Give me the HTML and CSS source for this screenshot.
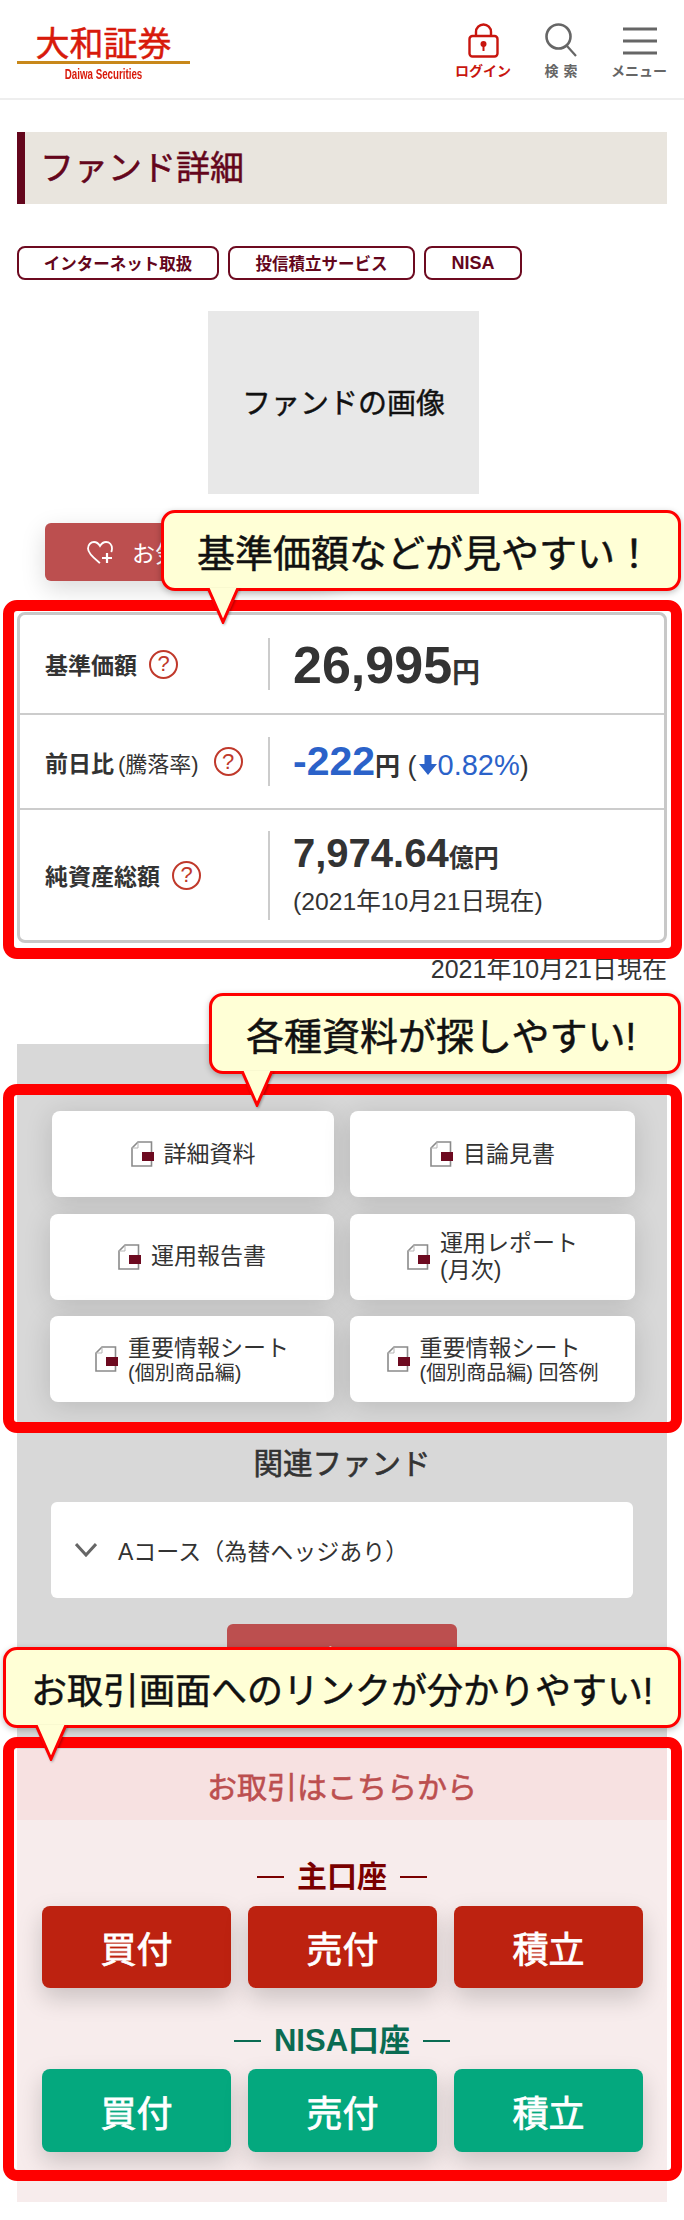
FILE: index.html
```html
<!DOCTYPE html>
<html lang="ja">
<head>
    <meta charset="UTF-8">
    <title>ファンド詳細</title>
    <link rel="stylesheet" href="styles.css">
</head>
<body>
<svg class="defs" width="0" height="0">
    <symbol id="doc" viewBox="0 0 23 26">
        <path d="M7 1 H20.5 V25 H1 V7 Z" fill="#fff" stroke="#8a8a8a" stroke-width="1.6"/>
        <path d="M7 1 V7 H1" fill="none" stroke="#b5b5b5" stroke-width="1"/>
        <rect x="11" y="11" width="12" height="9" fill="#6d0a20"/>
    </symbol>
</svg>
<div class="page">
    <div class="header">
        <div class="logo">
            <div class="logo-name">大和証券</div>
            <div class="logo-line"></div>
            <div class="logo-en">Daiwa Securities</div>
        </div>
        <div class="nav">
            <div class="nav-item login">
                <svg width="31" height="35" viewBox="0 0 31 35" fill="none" stroke="#c8150e" stroke-width="2.4">
                    <path d="M8 13 V9 a7.5 7.5 0 0 1 15 0 V13"/>
                    <rect x="1.5" y="13" width="28" height="20.5" rx="3"/>
                    <circle cx="15.5" cy="21" r="3" fill="#c8150e" stroke="none"/>
                    <rect x="14.5" y="22" width="2" height="6" fill="#c8150e" stroke="none"/>
                </svg>
                <span>ログイン</span>
            </div>
            <div class="nav-item">
                <svg width="33" height="35" viewBox="0 0 33 35" fill="none" stroke="#666">
                    <circle cx="13.5" cy="13.5" r="12" stroke-width="2.6"/>
                    <path d="M22 23 L31 33" stroke-width="2.2"/>
                </svg>
                <span class="spaced">検索</span>
            </div>
            <div class="nav-item">
                <svg width="35" height="35" viewBox="0 0 35 35" fill="none" stroke="#666" stroke-width="3">
                    <path d="M1 6 H35 M1 18 H35 M1 30 H35"/>
                </svg>
                <span>メニュー</span>
            </div>
        </div>
    </div>

    <h1 class="page-title">ファンド詳細</h1>

    <div class="tags">
        <span class="tag tag-a">インターネット取扱</span>
        <span class="tag tag-b">投信積立サービス</span>
        <span class="tag tag-c">NISA</span>
    </div>

    <div class="fund-image">ファンドの画像</div>

    <div class="fav-btn">
        <svg width="26" height="23" viewBox="0 0 26 23" fill="none" stroke="#fff" stroke-width="1.8">
            <path d="M13 22 C8 18 1 13 1 7.5 C1 3.5 4 1 7 1 C9.5 1 11.5 2.5 13 5 C14.5 2.5 16.5 1 19 1 C22.5 1 25 3.5 25 7.5 C25 9 24.7 10 24.2 11"/>
            <path d="M20 12 V22 M15 17 H25" stroke-width="2.2"/>
        </svg>
        <span>お気に入り登録</span>
    </div>

    <div class="price-card">
        <div class="price-row row-1">
            <div class="price-label">基準価額<span class="help">?</span></div>
            <div class="price-value"><span class="num-xl">26,995</span><span class="unit-l">円</span></div>
        </div>
        <div class="price-row row-2">
            <div class="price-label">前日比<small>(騰落率)</small><span class="help help-wide">?</span></div>
            <div class="price-value">
                <span class="num-l blue">-222</span><span class="unit-m">円</span>
                <span class="change">(<svg class="arrow" width="18" height="20" viewBox="0 0 18 20"><path d="M5.5 0 H12.5 V9 H18 L9 20 L0 9 H5.5 Z" fill="#2b62c9"/></svg><span class="blue">0.82%</span>)</span>
            </div>
        </div>
        <div class="price-row row-3">
            <div class="price-label">純資産総額<span class="help">?</span></div>
            <div class="price-value stacked">
                <div><span class="num-m">7,974.64</span><span class="unit-m">億円</span></div>
                <div class="as-of">(2021年10月21日現在)</div>
            </div>
        </div>
    </div>
    <div class="date-note">2021年10月21日現在</div>

    <div class="docs">
        <div class="doc-grid">
            <div class="doc-btn first"><svg class="doc-icon"><use href="#doc"/></svg><span>詳細資料</span></div>
            <div class="doc-btn"><svg class="doc-icon"><use href="#doc"/></svg><span>目論見書</span></div>
            <div class="doc-btn"><svg class="doc-icon"><use href="#doc"/></svg><span>運用報告書</span></div>
            <div class="doc-btn"><svg class="doc-icon"><use href="#doc"/></svg><span>運用レポート<br>(月次)</span></div>
            <div class="doc-btn"><svg class="doc-icon"><use href="#doc"/></svg><span>重要情報シート<small>(個別商品編)</small></span></div>
            <div class="doc-btn"><svg class="doc-icon"><use href="#doc"/></svg><span>重要情報シート<small>(個別商品編) 回答例</small></span></div>
        </div>
        <h2 class="related-title">関連ファンド</h2>
        <div class="related-select">
            <svg width="22" height="14" viewBox="0 0 22 14" fill="none" stroke="#666" stroke-width="3"><path d="M1 1 L11 12 L21 1"/></svg>
            <span>Aコース（為替ヘッジあり）</span>
        </div>
        <div class="related-btn">表示</div>
    </div>

    <div class="trade">
        <div class="trade-head">お取引はこちらから</div>
        <div class="trade-body">
            <div class="account red-title">主口座</div>
            <div class="trade-btns">
                <div class="trade-btn red">買付</div>
                <div class="trade-btn red">売付</div>
                <div class="trade-btn red">積立</div>
            </div>
            <div class="account green-title second">NISA口座</div>
            <div class="trade-btns tall">
                <div class="trade-btn green">買付</div>
                <div class="trade-btn green">売付</div>
                <div class="trade-btn green">積立</div>
            </div>
        </div>
    </div>

    <!-- annotations over the page -->
    <div class="frame frame-1"></div>
    <div class="frame frame-2"></div>
    <div class="frame frame-3"></div>

    <div class="callout callout-1">基準価額などが見やすい！
        <svg class="tail" width="34" height="36" viewBox="0 0 34 36"><path d="M2 0 L17 34 L32 0" fill="#ffffd6" stroke="#f00" stroke-width="3"/></svg>
    </div>
    <div class="callout callout-2">各種資料が探しやすい!
        <svg class="tail" width="34" height="36" viewBox="0 0 34 36"><path d="M2 0 L17 34 L32 0" fill="#ffffd6" stroke="#f00" stroke-width="3"/></svg>
    </div>
    <div class="callout callout-3">お取引画面へのリンクが分かりやすい!
        <svg class="tail" width="34" height="36" viewBox="0 0 34 36"><path d="M2 0 L17 34 L32 0" fill="#ffffd6" stroke="#f00" stroke-width="3"/></svg>
    </div>
</div>
</body>
</html>
```

FILE: styles.css
```css
* {
    box-sizing: border-box;
}
body {
    margin: 0;
    background: #fff;
    color: #333;
    font-family: "Liberation Sans", "Noto Sans CJK JP", sans-serif;
}
small {
    font-size: inherit;
}
.defs {
    position: absolute;
}
.page {
    position: relative;
    width: 684px;
    height: 2220px;
    overflow: hidden;
}

/* header */
.header {
    display: flex;
    justify-content: space-between;
    height: 100px;
    padding: 23px 6px 0 17px;
    border-bottom: 2px solid #eee;
}
.logo {
    width: 173px;
    text-align: center;
}
.logo-name {
    color: #d81a0b;
    font-family: "Noto Sans CJK JP", sans-serif;
    font-size: 34px;
    line-height: 38px;
    height: 38px;
    -webkit-text-stroke: 0.5px #d81a0b;
}
.logo-line {
    height: 3px;
    background: #c8881a;
}
.logo-en {
    color: #d81a0b;
    font-size: 15px;
    font-weight: bold;
    line-height: 16px;
    margin-top: 2px;
    transform: scaleX(0.65);
    white-space: nowrap;
}
.nav {
    display: flex;
}
.nav-item {
    display: flex;
    flex-direction: column;
    align-items: center;
    width: 78px;
    color: #666;
    font-size: 14px;
    font-weight: bold;
    line-height: 18px;
}
.nav-item svg {
    margin-bottom: 4px;
}
.nav-item.login {
    color: #c8150e;
}
.spaced {
    letter-spacing: 5px;
    margin-right: -5px;
}

/* title + tags */
.page-title {
    margin: 32px 17px 0;
    height: 72px;
    padding-left: 15px;
    border-left: 8px solid #64061c;
    background: #e9e5de;
    color: #64061c;
    font-size: 34px;
    font-weight: normal;
    line-height: 72px;
    -webkit-text-stroke: 0.5px #64061c;
}
.tags {
    display: flex;
    gap: 9px;
    margin: 42px 17px 0;
}
.tag {
    display: flex;
    align-items: center;
    justify-content: center;
    height: 34px;
    border: 2px solid #6d0a20;
    border-radius: 8px;
    color: #64061c;
    font-size: 16.5px;
    font-weight: bold;
}
.tag-a {
    width: 202px;
}
.tag-b {
    width: 187px;
}
.tag-c {
    width: 98px;
    font-size: 18px;
}

.fund-image {
    display: flex;
    align-items: center;
    justify-content: center;
    width: 271px;
    height: 183px;
    margin: 31px 0 0 208px;
    padding-bottom: 4px;
    background: #e8e8e8;
    color: #111;
    font-size: 29px;
    -webkit-text-stroke: 0.4px #111;
}
.fav-btn {
    display: flex;
    align-items: center;
    gap: 19px;
    width: 290px;
    height: 58px;
    margin: 29px 0 0 45px;
    padding-left: 42px;
    border-radius: 6px;
    background: #bc4f4f;
    color: #fff;
    font-size: 23px;
    box-shadow: 0 8px 24px rgba(0, 0, 0, 0.15);
}

/* price table */
.price-card {
    height: 331px;
    margin: 31px 17px 0;
    border: 3px solid #c8c8c8;
    border-radius: 8px;
    background: #fff;
}
.price-row {
    display: flex;
    align-items: center;
    padding-left: 25px;
    border-bottom: 2px solid #ccc;
}
.row-1 {
    height: 100px;
}
.row-2 {
    height: 95px;
}
.row-3 {
    height: 130px;
    border-bottom: 0;
}
.price-label {
    display: flex;
    align-items: center;
    width: 223px;
    color: #333;
    font-size: 23px;
    font-weight: bold;
}
.price-label small {
    margin-left: 4px;
    font-size: 22px;
    font-weight: normal;
}
.help {
    display: flex;
    align-items: center;
    justify-content: center;
    width: 29px;
    height: 29px;
    margin-left: 12px;
    border: 2px solid #c0392b;
    border-radius: 50%;
    color: #c0392b;
    font-size: 22px;
    font-weight: normal;
}
.help-wide {
    margin-left: 15px;
}
.price-value {
    padding-left: 23px;
    border-left: 2px solid #ccc;
    color: #333;
    height: 52px;
    line-height: 54px;
}
.row-2 .price-value {
    height: 49px;
    line-height: 49px;
}
.row-3 .price-value {
    line-height: 44px;
    height: 89px;
    white-space: nowrap;
}
.num-xl {
    font-size: 52px;
    font-weight: bold;
}
.num-l {
    font-size: 41px;
    font-weight: bold;
}
.num-m {
    font-size: 40px;
    font-weight: bold;
}
.unit-l {
    font-size: 28px;
    font-weight: bold;
}
.unit-m {
    font-size: 25px;
    font-weight: bold;
}
.blue {
    color: #2b62c9;
}
.change {
    margin-left: 3px;
    font-size: 27px;
}
.arrow {
    margin: 0 1px 0 2px;
}
.change .blue {
    font-size: 29px;
}
.as-of {
    font-size: 24.7px;
    line-height: 36px;
}
.date-note {
    margin: 8px 17px 0;
    font-size: 25px;
    line-height: 36px;
    text-align: right;
    color: #333;
}

/* documents */
.docs {
    height: 705px;
    margin: 57px 17px 0;
    padding-top: 67px;
    background: #d8d8d8;
}
.doc-grid {
    display: grid;
    grid-template-columns: 284px 285px;
    grid-auto-rows: 86px;
    gap: 16.5px 16px;
    margin-left: 33px;
}
.doc-btn {
    display: flex;
    align-items: center;
    justify-content: center;
    gap: 10px;
    border-radius: 8px;
    background: #fff;
    color: #333;
    font-size: 23px;
    line-height: 27px;
    box-shadow: 0 4px 28px rgba(0, 0, 0, 0.14);
}
.doc-btn.first {
    margin-left: 2px;
}
.doc-btn small {
    display: block;
    font-size: 20px;
    line-height: 22px;
}
.doc-icon {
    flex: none;
    width: 23px;
    height: 26px;
}
.related-title {
    margin: 42px 0 0;
    color: #333;
    font-size: 29.5px;
    font-weight: normal;
    line-height: 40px;
    text-align: center;
    -webkit-text-stroke: 0.6px #333;
}
.related-select {
    display: flex;
    align-items: center;
    gap: 21px;
    width: 582px;
    height: 96px;
    margin: 18px 0 0 34px;
    padding-left: 24px;
    border-radius: 6px;
    background: #fff;
    font-size: 23px;
    color: #333;
}
.related-btn {
    display: flex;
    justify-content: center;
    width: 230px;
    height: 60px;
    margin: 26px 0 0 210px;
    padding-top: 15px;
    border-radius: 6px;
    background: #bc4f4f;
    color: #fff;
    font-size: 23px;
}

/* trade */
.trade {
    margin: 0 17px;
    background: #f7ecec;
}
.trade-head {
    height: 71px;
    padding-top: 3px;
    background: #f7e1e1;
    color: #bc4f4f;
    font-size: 30px;
    line-height: 71px;
    text-align: center;
    -webkit-text-stroke: 0.6px #bc4f4f;
}
.trade-body {
    height: 382px;
    padding: 37px 25px 0;
}
.account {
    display: flex;
    align-items: center;
    justify-content: center;
    gap: 13px;
    font-size: 30px;
    font-weight: bold;
    line-height: 40px;
}
.account::before,
.account::after {
    content: "";
    width: 27px;
    height: 2px;
    background: currentColor;
}
.red-title {
    color: #7a0000;
}
.green-title {
    color: #0a6b52;
    font-size: 31px;
}
.account.second {
    margin-top: 33px;
}
.trade-btns {
    display: grid;
    grid-template-columns: repeat(3, 189px);
    gap: 17px;
    height: 82px;
    margin-top: 9px;
}
.trade-btns.tall {
    height: 83px;
    margin-top: 8px;
}
.trade-btn {
    display: flex;
    align-items: center;
    justify-content: center;
    border-radius: 8px;
    color: #fff;
    font-size: 36px;
    -webkit-text-stroke: 0.8px #fff;
    box-shadow: 0 10px 24px rgba(0, 0, 0, 0.18);
}
.trade-btn.red {
    background: #bd2210;
}
.trade-btn.green {
    background: #04a87e;
}

/* annotations */
.frame {
    position: absolute;
    left: 3px;
    width: 679px;
    border: 11px solid #f00;
    border-radius: 14px;
}
.frame-1 {
    top: 600px;
    height: 359px;
}
.frame-2 {
    top: 1084px;
    height: 349px;
}
.frame-3 {
    top: 1737px;
    height: 444px;
}
.callout {
    position: absolute;
    display: flex;
    align-items: center;
    justify-content: center;
    height: 81px;
    border: 3px solid #f00;
    border-radius: 14px;
    background: #ffffd6;
    color: #111;
    font-size: 38px;
    -webkit-text-stroke: 0.5px #111;
    box-shadow: 0 2px 6px rgba(0, 0, 0, 0.25);
}
.callout-1 {
    top: 510px;
    left: 161px;
    width: 520px;
    padding-left: 8px;
}
.callout-2 {
    top: 993px;
    left: 209px;
    width: 472px;
    padding-right: 8px;
}
.callout-3 {
    top: 1647px;
    left: 3px;
    width: 678px;
    font-size: 36px;
}
.tail {
    position: absolute;
    top: 75px;
    filter: drop-shadow(1px 1px 1px rgba(0, 0, 0, 0.3));
}
.callout-1 .tail {
    left: 42px;
}
.callout-2 .tail {
    left: 28px;
}
.callout-3 .tail {
    left: 28px;
}
```
